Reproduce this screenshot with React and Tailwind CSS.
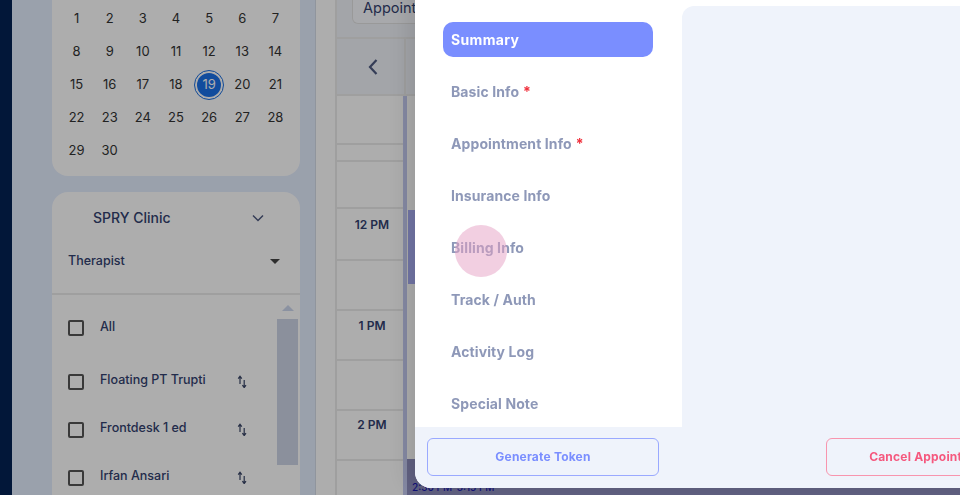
const days = [
  ["1", "2", "3", "4", "5", "6", "7"],
  ["8", "9", "10", "11", "12", "13", "14"],
  ["15", "16", "17", "18", "19", "20", "21"],
  ["22", "23", "24", "25", "26", "27", "28"],
  ["29", "30"],
];

const navItems = ["Basic Info", "Appointment Info", "Insurance Info", "Billing Info", "Track / Auth", "Activity Log", "Special Note"];

function SortIcon() {
  return (
    <svg width="10" height="13" viewBox="0 0 10 13" className="text-[#3a4668]" fill="none">
      <path d="M3 9V2M1.2 3.6 3 1.2l1.8 2.4" stroke="currentColor" strokeWidth="1.2" />
      <path d="M7.2 5v7M5.4 10.2l1.8 2.4 1.8-2.4" stroke="currentColor" strokeWidth="1.2" />
    </svg>
  );
}

function Therapist({ name, className }) {
  return (
    <div className={`flex items-center h-[48px] ${className || ""}`}>
      <span className="w-4 h-4 border-2 border-[#555] rounded-[2px] shrink-0" />
      <span className="ml-4 w-[137px] text-[12.5px] text-[#33416f] font-medium -mt-[3px]">{name}</span>
      <SortIcon />
    </div>
  );
}

function Row({ h, children, className }) {
  return <div className={`border-b-2 border-[#eaeaea] ${h} ${className || ""}`}>{children}</div>;
}

export default function App() {
  return (
    <div className="relative w-[960px] h-[495px] overflow-hidden flex bg-white font-['Inter',sans-serif]">
      <div className="w-3 shrink-0 bg-[#042255]" />

      <aside className="w-[304px] shrink-0 bg-[#e4edfe] pl-10 pr-[15px] flex flex-col gap-4 border-r border-[#d5dce8]">
        <div className="h-[175.5px] shrink-0 bg-white rounded-b-2xl pt-[2.5px] px-2">
          {days.map((week, i) => (
            <div key={i} className="grid grid-cols-7 h-[33px] items-center text-center text-[13px] text-[#333]">
              {week.map((d) =>
                d === "19" ? (
                  <span key={d} className="justify-self-center w-[30px] h-[30px] rounded-full border border-[#1a6ee0] p-[2px]">
                    <span className="flex w-full h-full rounded-full bg-[#1a70e8] text-white items-center justify-center text-[13px]">{d}</span>
                  </span>
                ) : (
                  <span key={d}>{d}</span>
                )
              )}
            </div>
          ))}
        </div>

        <div className="flex-1 bg-white rounded-t-2xl overflow-hidden">
          <div className="flex items-center justify-between pl-[41px] pr-9 h-[51px]">
            <span className="text-[14px] text-[#33416f] font-medium">SPRY Clinic</span>
            <svg width="12" height="8" viewBox="0 0 12 8" fill="none" className="mt-[2px]">
              <path d="M1 1.5 6 6.5l5-5" stroke="#4e5a80" strokeWidth="1.5" />
            </svg>
          </div>
          <div className="flex items-center justify-between pl-4 pr-[20px] h-[37px] border-b-2 border-[#eaeaea] box-content pb-[13px]">
            <span className="text-[12.5px] text-[#33416f] font-medium">Therapist</span>
            <span className="w-0 h-0 border-x-[5px] border-x-transparent border-t-[5px] border-t-[#444]" />
          </div>
          <div className="flex pl-4 pt-[1px]">
            <div className="w-[209px] shrink-0">
              <div className="flex items-center h-[64px]">
                <span className="w-4 h-4 border-2 border-[#555] rounded-[2px] shrink-0" />
                <span className="ml-4 text-[12.5px] text-[#33416f] font-medium">All</span>
              </div>
              <Therapist name="Floating PT Trupti" className="mt-[-2px]" />
              <Therapist name="Frontdesk 1 ed" />
              <Therapist name="Irfan Ansari" />
            </div>
            <div className="w-[21px] shrink-0 flex flex-col items-center">
              <span className="mt-[9px] w-0 h-0 border-x-[6px] border-x-transparent border-b-[6px] border-b-[#cdd7ee]" />
              <span className="mt-[8px] w-full h-[146px] bg-[#cdd5e6]" />
            </div>
          </div>
        </div>
      </aside>

      <main className="flex-1 flex min-w-0 bg-white">
        <div className="w-[21px] shrink-0 border-r-2 border-[#eaeaea] bg-white" />
        <div className="flex-1 min-w-0 flex flex-col">
          <div className="h-[37px] shrink-0 bg-[#f0f4fa] pl-[15px] border-b-2 border-[#eaeaea] box-content">
            <div className="h-[24px] w-[80px] border border-[#e2e2e2] border-t-0 rounded-b-md bg-[#f8fafe] text-[14.5px] text-[#33416f] pl-[10px] pt-[1px] leading-[14px] whitespace-nowrap overflow-hidden">
              Appointment
            </div>
          </div>
          <div className="h-[55px] shrink-0 bg-[#f0f4fa] border-b-2 border-[#eaeaea] flex box-content">
            <div className="w-[69px] flex items-center justify-center border-r-2 border-[#eaeaea]">
              <svg width="12" height="18" viewBox="0 0 12 18" fill="none" className="ml-[5px]">
                <path d="M9.5 2 3 9l6.5 7" stroke="#4e5a80" strokeWidth="2.2" />
              </svg>
            </div>
          </div>
          <div className="flex flex-1 min-h-0">
            <div className="w-[66px] shrink-0 flex flex-col">
              <Row h="h-[49px]" />
              <Row h="h-[17px]" />
              <Row h="h-[47px]" />
              <div className="h-[52px] border-b-2 border-[#eaeaea] text-[12px] font-semibold text-[#33416f] text-center pl-1 pt-[7px]">12 PM</div>
              <Row h="h-[50px]" />
              <div className="h-[50px] border-b-2 border-[#eaeaea] text-[12px] font-semibold text-[#33416f] text-center pl-1 pt-[6px]">1 PM</div>
              <Row h="h-[50px]" />
              <div className="h-[50px] border-b-2 border-[#eaeaea] text-[12px] font-semibold text-[#33416f] text-center pl-1 pt-[5px]">2 PM</div>
              <div className="flex-1" />
            </div>
            <div className="w-[4px] shrink-0 bg-[#c5caf0]" />
            <div className="flex-1 min-w-0 flex flex-col">
              <div className="h-[115px]" />
              <div className="h-[74px] ml-[1px] bg-[#a9adf3]" />
              <div className="h-[176px]" />
              <div className="flex-1 bg-[#8f8fc0] text-[10px] text-[#1b1bb0] font-medium whitespace-nowrap pl-[5px] pt-[21px]">2:30 PM-3:15 PM</div>
            </div>
          </div>
        </div>
      </main>

      <div className="absolute inset-0 bg-black/32 backdrop-blur-[0.5px]" />

      <div className="absolute left-[415px] top-[-20px] w-[700px] h-[508px] bg-white rounded-bl-2xl overflow-hidden shadow-[-8px_0_20px_rgba(0,0,0,0.1)] flex flex-col text-[14px]">
        <div className="h-[447px] shrink-0 flex">
          <nav className="w-[267px] shrink-0 pl-7 pr-[29px] pt-[42px]">
            <div className="h-[35px] rounded-[10px] bg-[#7a8eff] text-white font-bold pl-2 flex items-center mb-[8px] tracking-[0.35px]">Summary</div>
            {navItems.map((item) => (
              <div key={item} className="h-[52px] pl-2 flex items-center font-bold text-[#8e98b8] tracking-[0.1px] whitespace-nowrap">
                <span>{item}</span>
                {(item === "Basic Info" || item === "Appointment Info") && <span className="text-[#f0303c] ml-1">*</span>}
              </div>
            ))}
          </nav>
          <div className="flex-1 mt-[26px] rounded-tl-xl bg-[#eff3fb]" />
        </div>
        <div className="flex-1 flex items-center bg-[#eff3fb] pl-3">
          <button className="w-[232px] h-[38px] -mt-[1px] rounded-md border-[1.5px] border-[#9aa9ff] text-[12px] font-bold text-[#7a8eff] tracking-[0.2px]">Generate Token</button>
          <button className="w-[210px] h-[38px] -mt-[1px] ml-[167px] rounded-md border-[1.5px] border-[#f895ae] text-[12px] font-bold text-[#f5587e] tracking-[0.2px] whitespace-nowrap">Cancel Appointment</button>
        </div>
      </div>

      <div className="absolute left-[455px] top-[225px] w-[52px] h-[52px] rounded-full bg-[#e6a0c4]/50" />
    </div>
  );
}
